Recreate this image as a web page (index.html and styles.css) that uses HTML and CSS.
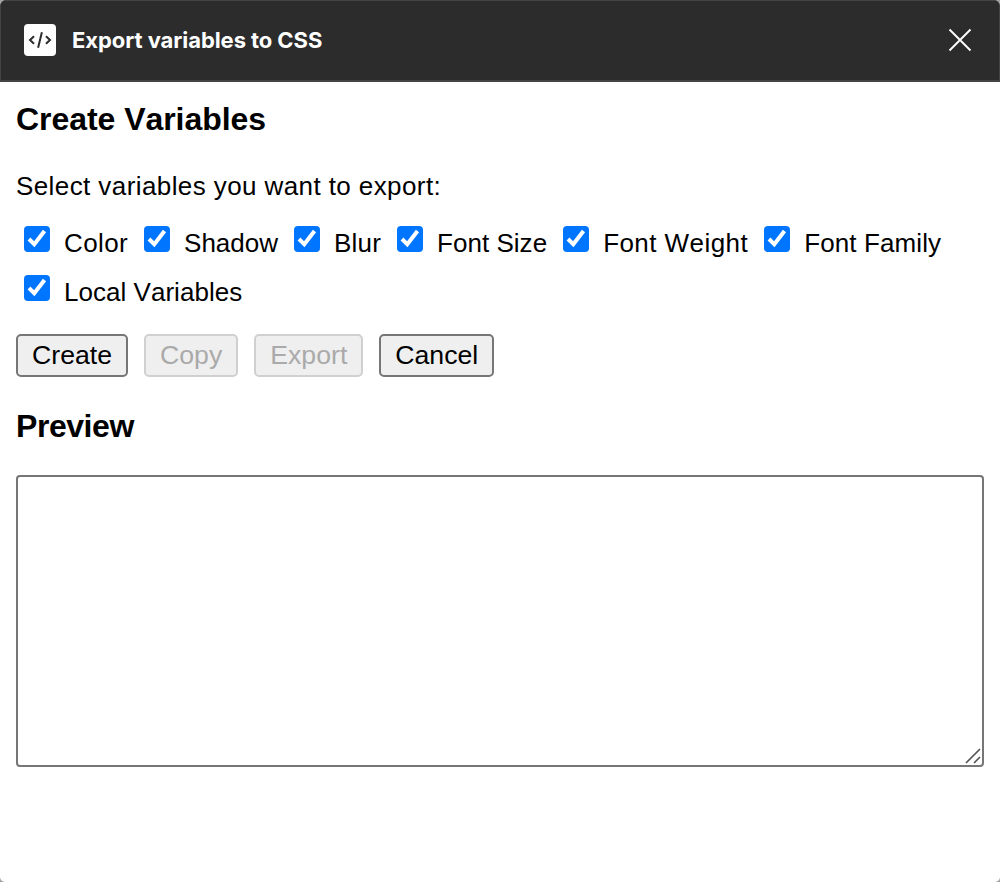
FILE: index.html
```html
<!DOCTYPE html>
<html lang="en">
<head>
<meta charset="utf-8">
<title>Export variables to CSS</title>
<link rel="stylesheet" href="styles.css">
</head>
<body>
<div class="window">
  <header class="titlebar">
    <svg class="logo" viewBox="0 0 32 32"><rect width="32" height="32" rx="4" fill="#fff"/><path d="M10 12.200l-4 3.800 4 3.800M22 12.200l4 3.800-4 3.800M17.900 8.300l-3.800 15.400" fill="none" stroke="#2c2c2c" stroke-width="2"/></svg>
    <span class="title">Export variables to CSS</span>
    <svg class="close" viewBox="0 0 24 24"><path d="M1.500 1.500l21 21M22.500 1.500l-21 21" stroke="#fff" stroke-width="1.900" fill="none"/></svg>
  </header>
  <main class="content">
    <h2 class="heading">Create Variables</h2>
    <p class="prompt">Select variables you want to export:</p>
    <div class="options">
      <label class="option color"><svg class="check" viewBox="0 0 26 26"><rect width="26" height="26" rx="4"/><path d="M5 13l5.300 5.300L20.500 5"/></svg><span>Color</span></label>
      <label class="option shadow"><svg class="check" viewBox="0 0 26 26"><rect width="26" height="26" rx="4"/><path d="M5 13l5.300 5.300L20.500 5"/></svg><span>Shadow</span></label>
      <label class="option blur"><svg class="check" viewBox="0 0 26 26"><rect width="26" height="26" rx="4"/><path d="M5 13l5.300 5.300L20.500 5"/></svg><span>Blur</span></label>
      <label class="option size"><svg class="check" viewBox="0 0 26 26"><rect width="26" height="26" rx="4"/><path d="M5 13l5.300 5.300L20.500 5"/></svg><span>Font Size</span></label>
      <label class="option weight"><svg class="check" viewBox="0 0 26 26"><rect width="26" height="26" rx="4"/><path d="M5 13l5.300 5.300L20.500 5"/></svg><span>Font Weight</span></label>
      <label class="option family"><svg class="check" viewBox="0 0 26 26"><rect width="26" height="26" rx="4"/><path d="M5 13l5.300 5.300L20.500 5"/></svg><span>Font Family</span></label>
      <label class="option local"><svg class="check" viewBox="0 0 26 26"><rect width="26" height="26" rx="4"/><path d="M5 13l5.300 5.300L20.500 5"/></svg><span>Local Variables</span></label>
    </div>
    <div class="actions">
      <button class="button">Create</button>
      <button class="button" disabled>Copy</button>
      <button class="button" disabled>Export</button>
      <button class="button">Cancel</button>
    </div>
    <h2 class="heading preview-heading">Preview</h2>
    <div class="preview"><svg class="grip" viewBox="0 0 16 16"><path d="M1 15L15 1M9 15l6-6" stroke="#555" stroke-width="1.700" fill="none"/></svg></div>
  </main>
</div>
</body>
</html>
```
FILE: styles.css
```css
* { box-sizing: border-box; }
body { margin: 0; background: #a0a0a0; }
.window { height: 882px; background: #fff; border-radius: 5px; overflow: hidden; font-family: "Liberation Sans", Arial, sans-serif; color: #000; }
.titlebar { height: 82px; background: #2c2c2c; border: 1px solid #444; border-bottom-width: 2px; border-radius: 5px 5px 0 0; display: flex; align-items: center; padding: 0 27px 1px 23px; }
.logo { width: 32px; height: 32px; margin-right: 16px; }
.title { font: bold 22px/32px Inter, sans-serif; color: #fff; letter-spacing: -0.07px; white-space: nowrap; }
.close { width: 24px; height: 24px; margin-left: auto; }
.content { padding: 13px 16px 0; }
.heading { margin: 0; font-size: 32px; line-height: 48px; font-weight: bold; letter-spacing: -0.05px; font-kerning: none; }
.prompt { margin: 25px 0 0; font-size: 26px; line-height: 36px; letter-spacing: 0.41px; font-kerning: none; }
.options { display: flex; flex-wrap: wrap; column-gap: 16px; padding: 22px 0 0 8px; }
.option { display: flex; height: 49px; font-size: 26px; line-height: 34px; white-space: nowrap; font-kerning: none; }
.check { width: 26px; height: 26px; margin-right: 14px; }
.check rect { fill: #0075ff; }
.check path { fill: none; stroke: #fff; stroke-width: 4; }
.color { letter-spacing: .38px; }
.shadow { letter-spacing: .01px; }
.blur { letter-spacing: .2px; }
.size { letter-spacing: .02px; }
.weight { letter-spacing: .44px; }
.family { letter-spacing: .11px; }
.local { letter-spacing: .03px; }
.actions { display: flex; gap: 16px; padding-top: 10px; }
.button { height: 43px; padding: 0 14px; border: 2px solid #767676; border-radius: 5px; background: #efefef; color: #000; font: 26.667px/37px "Liberation Sans", Arial, sans-serif; }
.button:disabled { border-color: #d0d0d0; color: #aaa; }
.preview-heading { margin-top: 25px; letter-spacing: -0.45px; }
.preview { height: 292px; margin-top: 25px; border: 2px solid #767676; border-radius: 4px; display: flex; justify-content: flex-end; align-items: flex-end; padding: 1px; }
.grip { width: 16px; height: 16px; }
```
